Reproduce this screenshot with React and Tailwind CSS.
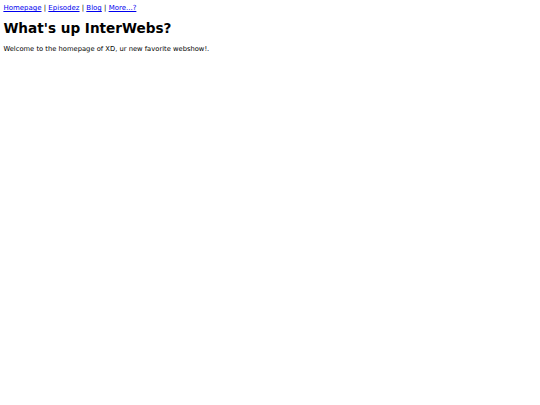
import React from 'react';

const links = ['Homepage', 'Episodez', 'Blog', 'More...?'];

export default function App() {
  return (
    <div className="min-h-screen bg-white p-[3.375px] text-black font-['DejaVu_Sans',sans-serif]">
      <div className="mt-[1px] text-[7px] leading-[normal]">
        {links.map((l, i) => (
          <React.Fragment key={l}>
            {i > 0 && ' | '}
            <a href="#" className="text-[#0000ee] underline">{l}</a>
          </React.Fragment>
        ))}
      </div>
      <h1 className="mt-[8px] text-[13.6px] font-bold leading-[normal]">What's up InterWebs?</h1>
      <p className="mt-[9px] text-[6.75px] leading-[normal]">Welcome to the homepage of XD, ur new favorite webshow!.</p>
    </div>
  );
}
